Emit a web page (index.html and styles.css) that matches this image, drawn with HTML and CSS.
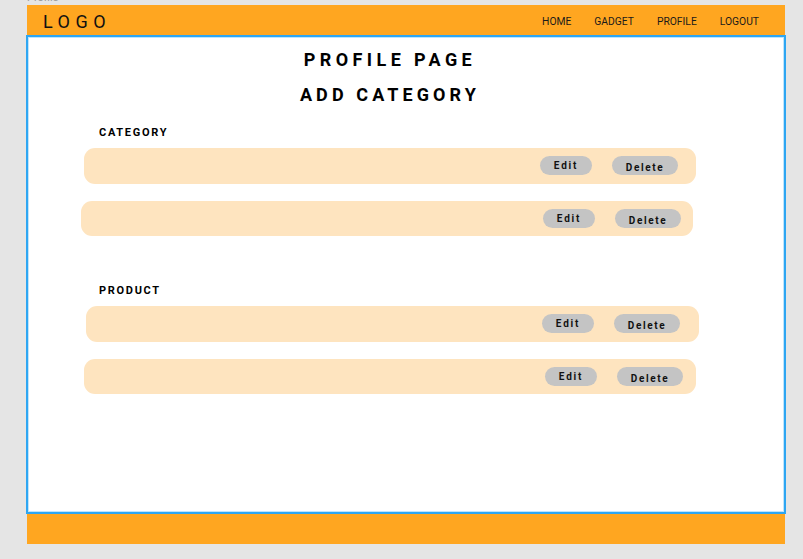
FILE: index.html
```html
<!DOCTYPE html>
<html lang="en">
<head>
<meta charset="utf-8">
<title>Profile</title>
<link rel="stylesheet" href="styles.css">
</head>
<body>
<div class="page">
  <div class="frame-label">Profile</div>
  <header class="topbar">
    <div class="logo">LOGO</div>
    <nav class="nav">
      <a href="#">HOME</a>
      <a href="#">GADGET</a>
      <a href="#">PROFILE</a>
      <a href="#">LOGOUT</a>
    </nav>
  </header>
  <main class="main">
    <div class="content">
      <h1 class="title">PROFILE PAGE</h1>
      <h2 class="title title-sub">ADD CATEGORY</h2>

      <section class="section section-category">
        <div class="section-label">CATEGORY</div>
        <div class="rows">
          <div class="row row-1">
            <button class="btn btn-edit">Edit</button>
            <button class="btn btn-delete">Delete</button>
          </div>
          <div class="row row-2">
            <button class="btn btn-edit">Edit</button>
            <button class="btn btn-delete">Delete</button>
          </div>
        </div>
      </section>

      <section class="section section-product">
        <div class="section-label">PRODUCT</div>
        <div class="rows">
          <div class="row row-3">
            <button class="btn btn-edit">Edit</button>
            <button class="btn btn-delete">Delete</button>
          </div>
          <div class="row row-4">
            <button class="btn btn-edit">Edit</button>
            <button class="btn btn-delete">Delete</button>
          </div>
        </div>
      </section>
    </div>
  </main>
  <footer class="footer"></footer>
</div>
</body>
</html>
```

FILE: styles.css
```css
* {
  box-sizing: border-box;
}

html, body {
  margin: 0;
  padding: 0;
}

body {
  background: #e5e5e5;
  font-family: Roboto, "Liberation Sans", Arial, sans-serif;
  color: #000;
  width: 803px;
  height: 559px;
  overflow: hidden;
}

.page {
  margin-left: 27px;
  width: 758px;
  display: flex;
  flex-direction: column;
}

.frame-label {
  font-size: 11px;
  line-height: 11px;
  height: 11px;
  margin-top: -8px;
  margin-bottom: 2px;
  color: #9a9a9a;
}

.topbar {
  height: 30px;
  background: #ffa620;
  display: flex;
  align-items: center;
  justify-content: space-between;
  padding: 2px 26px 0 16px;
}

.logo {
  font-size: 18px;
  letter-spacing: 5.5px;
  color: #111;
  font-weight: 400;
}

.nav {
  display: flex;
  gap: 23px;
}

.nav a {
  font-size: 10.3px;
  color: #1a1a1a;
  text-decoration: none;
}

.main {
  height: 479px;
  margin: 0 -1px;
  background: #fff;
  border: 2px solid #2ea6f2;
  box-shadow: inset 0 0 0 1px #bfe4fb;
  padding-top: 11px;
}

.content {
  width: 612px;
  margin-left: 56px;
  display: flex;
  flex-direction: column;
}

.title {
  margin: 0;
  font-size: 18px;
  line-height: 24px;
  font-weight: 700;
  letter-spacing: 4.4px;
  text-align: center;
}

.title-sub {
  margin-top: 11px;
  letter-spacing: 4.1px;
}

.section-category {
  margin-top: 19px;
}

.section-product {
  margin-top: 48px;
}

.section-label {
  font-size: 11px;
  line-height: 14px;
  font-weight: 700;
  letter-spacing: 1.7px;
  margin-left: 15px;
  margin-bottom: 8px;
}

.rows {
  display: flex;
  flex-direction: column;
  gap: 17px;
}

.row {
  height: 35.5px;
  width: 612px;
  background: #fee4bf;
  border-radius: 11px;
  display: flex;
  align-items: center;
  justify-content: flex-end;
  gap: 20px;
}

.row-1 { padding-right: 18px; }
.row-2 { margin-left: -3px; padding-right: 12px; }
.row-3 { margin-left: 2px; width: 613px; padding-right: 19px; }
.row-4 { padding-right: 13px; }

.btn {
  height: 19px;
  border: none;
  border-radius: 10px;
  background: #c4c4c4;
  font-family: Roboto, "Liberation Sans", Arial, sans-serif;
  font-size: 10px;
  font-weight: 700;
  letter-spacing: 1.8px;
  color: #111;
  text-align: center;
  padding: 0;
  line-height: 19px;
}

.btn-edit {
  width: 52px;
  padding-bottom: 2px;
}

.btn-delete {
  width: 66px;
  padding-top: 2px;
  letter-spacing: 1.6px;
}

.footer {
  height: 30px;
  background: #ffa620;
}
```
